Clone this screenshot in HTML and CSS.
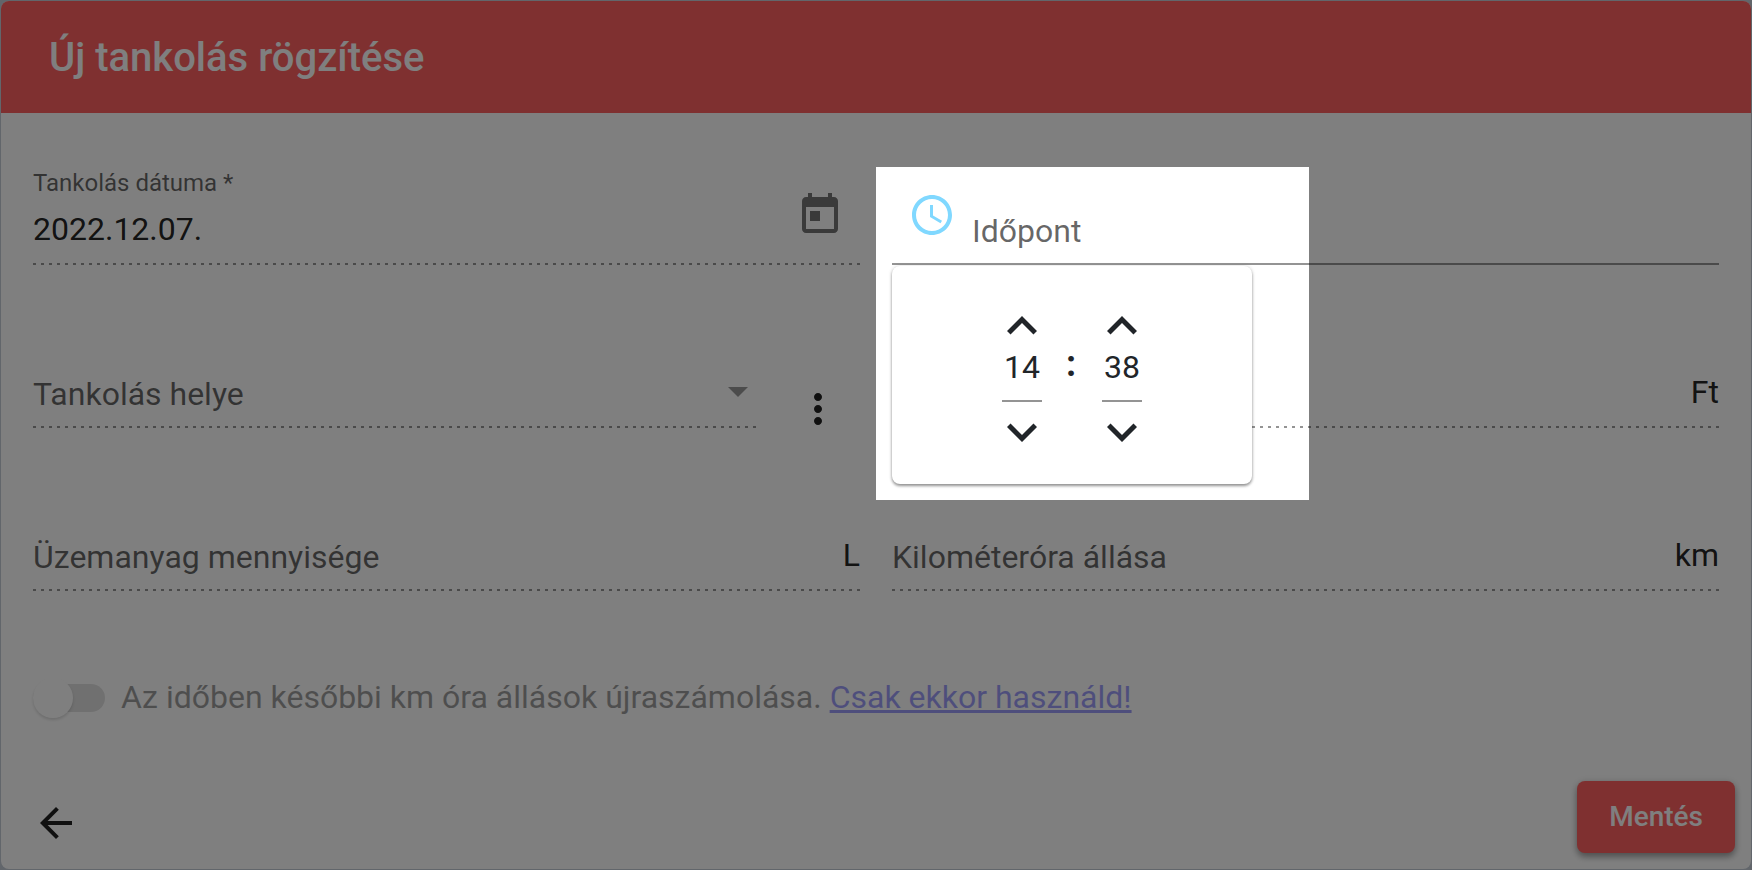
FILE: index.html
```html
<!DOCTYPE html>
<html lang="hu">
<head>
<meta charset="utf-8">
<meta name="viewport" content="width=device-width, initial-scale=1">
<title>Új tankolás rögzítése</title>
<link rel="stylesheet" href="styles.css">
</head>
<body>
<main class="card">
  <header class="card-header">
    <h1 class="card-title">Új tankolás rögzítése</h1>
  </header>
  <form class="form">
    <div class="fields">
      <div class="field">
        <div class="field-body">
          <label class="float-label" for="date">Tankolás dátuma *</label>
          <input class="field-input" id="date" type="text" value="2022.12.07.">
        </div>
        <button class="icon-button" type="button" aria-label="Naptár megnyitása">
          <svg class="icon muted" viewBox="0 0 24 24"><path d="M19 3h-1V1h-2v2H8V1H6v2H5c-1.11 0-1.99.9-1.99 2L3 19c0 1.1.89 2 2 2h14c1.1 0 2-.9 2-2V5c0-1.1-.9-2-2-2zm0 16H5V8h14v11zM7 10h5v5H7z"/></svg>
        </button>
      </div>

      <div class="field field-solid">
        <button class="icon-button" type="button" aria-label="Időpont választása">
          <svg class="icon clock" viewBox="0 0 24 24"><path d="M11.99 2C6.47 2 2 6.48 2 12s4.47 10 9.99 10C17.52 22 22 17.52 22 12S17.52 2 11.99 2zM12 20c-4.42 0-8-3.58-8-8s3.58-8 8-8 8 3.58 8 8-3.58 8-8 8z"/><path d="M12.5 7H11v6l5.25 3.15.75-1.23-4.5-2.67z"/></svg>
        </button>
        <div class="field-body stacked">
          <label class="field-label" for="time">Időpont</label>
          <input class="field-input" id="time" type="text">
        </div>
        <div class="spotlight"></div>
        <div class="time-popup" role="group" aria-label="Időpont">
          <div class="spinner">
            <button class="step" type="button" aria-label="Óra növelése"><svg class="chevron" viewBox="0 0 24 24"><path d="M12 8l-6 6 1.41 1.41L12 10.83l4.59 4.58L18 14z"/></svg></button>
            <input class="spinner-input" type="text" value="14" aria-label="Óra">
            <button class="step step-down" type="button" aria-label="Óra csökkentése"><svg class="chevron" viewBox="0 0 24 24"><path d="M16.59 8.59L12 13.17 7.41 8.59 6 10l6 6 6-6z"/></svg></button>
          </div>
          <span class="colon">:</span>
          <div class="spinner">
            <button class="step" type="button" aria-label="Perc növelése"><svg class="chevron" viewBox="0 0 24 24"><path d="M12 8l-6 6 1.41 1.41L12 10.83l4.59 4.58L18 14z"/></svg></button>
            <input class="spinner-input" type="text" value="38" aria-label="Perc">
            <button class="step step-down" type="button" aria-label="Perc csökkentése"><svg class="chevron" viewBox="0 0 24 24"><path d="M16.59 8.59L12 13.17 7.41 8.59 6 10l6 6 6-6z"/></svg></button>
          </div>
        </div>
      </div>

      <div class="field-group">
        <div class="field">
          <div class="field-body stacked">
            <label class="field-label" for="place">Tankolás helye</label>
            <select class="field-input" id="place"><option value=""></option></select>
            <svg class="select-arrow" viewBox="0 0 20 10"><path d="M0 0h20L10 10z"/></svg>
          </div>
        </div>
        <button class="more-button" type="button" aria-label="További műveletek">
          <svg class="icon" viewBox="0 0 24 24"><path d="M12 8c1.1 0 2-.9 2-2s-.9-2-2-2-2 .9-2 2 .9 2 2 2zm0 2c-1.1 0-2 .9-2 2s.9 2 2 2 2-.9 2-2-.9-2-2-2zm0 6c-1.1 0-2 .9-2 2s.9 2 2 2 2-.9 2-2-.9-2-2-2z"/></svg>
        </button>
      </div>

      <div class="field">
        <div class="field-body"><input class="field-input" type="text" aria-label="Összeg"></div>
        <span class="suffix">Ft</span>
      </div>

      <div class="field">
        <div class="field-body stacked">
          <label class="field-label" for="amount">Üzemanyag mennyisége</label>
          <input class="field-input" id="amount" type="text">
        </div>
        <span class="suffix">L</span>
      </div>

      <div class="field">
        <div class="field-body stacked">
          <label class="field-label" for="odometer">Kilométeróra állása</label>
          <input class="field-input" id="odometer" type="text">
        </div>
        <span class="suffix">km</span>
      </div>
    </div>

    <div class="toggle-row">
      <input class="toggle" id="recalc" type="checkbox" disabled>
      <span class="toggle-text"><label for="recalc">Az időben későbbi km óra állások újraszámolása.</label> <a class="toggle-link" href="#help">Csak ekkor használd!</a></span>
    </div>

    <div class="actions">
      <button class="back-button" type="button" aria-label="Vissza">
        <svg class="icon" viewBox="0 0 24 24"><path d="M20 11H7.83l5.59-5.59L12 4l-8 8 8 8 1.41-1.41L7.83 13H20v-2z"/></svg>
      </button>
      <button class="save-button" type="submit">Mentés</button>
    </div>
  </form>
</main>
</body>
</html>
```
FILE: styles.css
```css
* {
  box-sizing: border-box;
}

body {
  margin: 0;
  padding: 1px;
  min-height: 100vh;
  display: flex;
  overflow: hidden;
  background: #c4ccd6;
  color: rgba(0, 0, 0, 0.87);
  font-family: Roboto, "Liberation Sans", sans-serif;
  font-size: 32px;
  line-height: 36px;
}

button,
input,
select {
  margin: 0;
  padding: 0;
  border: 0;
  background: transparent;
  color: inherit;
  font: inherit;
  outline: 0;
}

svg {
  display: block;
  flex: none;
  fill: currentColor;
}

.card {
  flex: 1;
  display: flex;
  flex-direction: column;
  border-radius: 8px;
  background: #fff;
}

.card-header {
  padding: 32px 48px 30px;
  border-radius: 8px 8px 0 0;
  background: #ff6161;
  color: #fff;
}

.card-title {
  margin: 0;
  font-size: 40px;
  font-weight: 500;
  line-height: 50px;
}

.form {
  flex: 1;
  display: flex;
  flex-direction: column;
  padding: 48px 16px 16px;
}

.fields {
  display: grid;
  grid-template-columns: 1fr 1fr;
  gap: 59px 32px;
  padding: 0 16px;
}

.field {
  position: relative;
  flex: 1;
  display: flex;
  align-items: flex-end;
  min-width: 0;
  min-height: 104px;
  padding-bottom: 2px;
  background: linear-gradient(to right, rgba(0, 0, 0, 0.42) 33%, transparent 0) left bottom / 8px 2px repeat-x;
}

.field-solid {
  background: linear-gradient(rgba(0, 0, 0, 0.42), rgba(0, 0, 0, 0.42)) left bottom / 100% 2px no-repeat;
}

.field-group {
  display: flex;
  align-items: flex-end;
  gap: 20px;
}

.field-body {
  flex: 1;
  display: grid;
  min-width: 0;
  padding-bottom: 16px;
}

.float-label {
  margin-bottom: 14px;
  color: rgba(0, 0, 0, 0.6);
  font-size: 24px;
  line-height: 28px;
}

.field-label,
.stacked .field-input,
.select-arrow {
  grid-area: 1 / 1;
}

.field-label {
  align-self: end;
  height: 34px;
  color: rgba(0, 0, 0, 0.6);
}

.field-input {
  width: 100%;
  height: 36px;
  appearance: none;
}

.select-arrow {
  justify-self: end;
  align-self: center;
  width: 20px;
  height: 10px;
  margin-right: 8px;
  color: rgba(0, 0, 0, 0.4);
}

.suffix {
  padding-bottom: 16px;
}

.icon {
  width: 48px;
  height: 48px;
}

.icon-button {
  display: grid;
  place-items: center;
  width: 80px;
  height: 80px;
  margin-bottom: 8px;
}

.muted {
  color: rgba(0, 0, 0, 0.54);
}

.clock {
  color: #80d8ff;
}

.more-button {
  display: flex;
  align-items: center;
  justify-content: center;
  width: 84px;
  height: 38px;
}

/* Lit area around the active field; its shadow dims the rest of the page */
.spotlight {
  position: absolute;
  z-index: 2;
  top: 6px;
  left: -16px;
  width: 433px;
  height: 333px;
  box-shadow: 0 0 0 200vmax rgba(0, 0, 0, 0.5);
  pointer-events: none;
}

.time-popup {
  position: absolute;
  z-index: 1;
  top: 100%;
  left: 0;
  display: flex;
  justify-content: center;
  width: 360px;
  margin-top: 1px;
  padding: 38px 0 30px;
  border-radius: 8px;
  background: #fff;
  box-shadow: 0 2px 3px rgba(0, 0, 0, 0.4), 0 0 4px rgba(0, 0, 0, 0.12);
  color: #212529;
}

.spinner {
  display: flex;
  flex-direction: column;
  width: 40px;
}

.step {
  display: flex;
  align-items: center;
  justify-content: center;
  height: 44px;
}

.step-down {
  margin-top: 8px;
}

.chevron {
  width: 60px;
  height: 60px;
}

.spinner-input {
  width: 40px;
  height: 54px;
  padding-bottom: 14px;
  border-bottom: 2px solid rgba(0, 0, 0, 0.42);
  text-align: center;
}

.colon {
  width: 60px;
  padding: 36px 2px 0 0;
  font-size: 36px;
  font-weight: 700;
  line-height: 48px;
  text-align: center;
}

.toggle-row {
  display: flex;
  align-items: center;
  gap: 16px;
  margin-top: 88px;
  padding: 0 16px;
}

.toggle {
  display: flex;
  align-items: center;
  flex: none;
  width: 72px;
  height: 28px;
  border-radius: 14px;
  background: rgba(0, 0, 0, 0.12);
  appearance: none;
}

.toggle::before {
  content: "";
  flex: none;
  width: 40px;
  height: 40px;
  border-radius: 50%;
  background: #fff;
  box-shadow: 0 2px 3px rgba(0, 0, 0, 0.14);
}

.toggle-text {
  padding-bottom: 2px;
  opacity: 0.38;
  color: #000;
}

.toggle-link {
  color: #0000ee;
}

.actions {
  display: flex;
  align-items: center;
  justify-content: space-between;
  margin-top: auto;
}

.back-button {
  margin: 12px 0 0 15px;
}

.save-button {
  padding: 0 32px;
  border-radius: 8px;
  background: #ff6161;
  box-shadow: 0 4px 6px rgba(0, 0, 0, 0.3), 0 1px 8px rgba(0, 0, 0, 0.15);
  color: #fff;
  font-size: 28px;
  font-weight: 500;
  line-height: 72px;
}
```
